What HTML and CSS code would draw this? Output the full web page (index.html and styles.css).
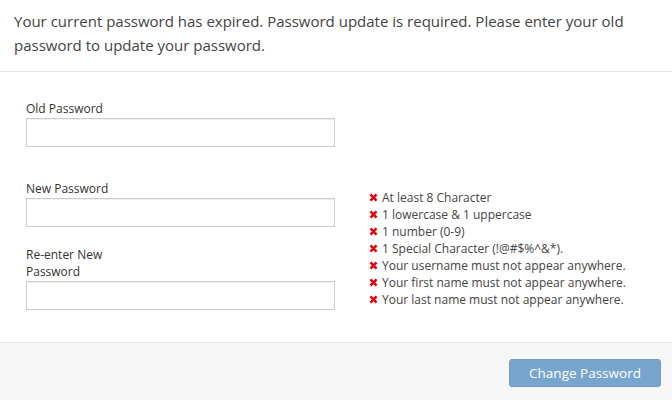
FILE: index.html
```html
<!DOCTYPE html>
<html>
<head>
<meta charset="utf-8">
<link rel="stylesheet" href="styles.css">
</head>
<body>
<div class="dialog">
  <div class="header">
    <p class="intro">Your current password has expired. Password update is required. Please enter your old password to update your password.</p>
  </div>
  <div class="content">
    <div class="fields">
      <div class="group g1">
        <label class="label">Old Password</label>
        <input class="input" type="password">
      </div>
      <div class="group g2">
        <label class="label">New Password</label>
        <input class="input" type="password">
      </div>
      <div class="group g3">
        <label class="label">Re-enter New<br>Password</label>
        <input class="input" type="password">
      </div>
    </div>
    <ul class="rules">
      <li><svg class="x" viewBox="0 0 10 10"><path d="M1.6 1.6 L8.4 8.4 M8.4 1.6 L1.6 8.4"/></svg>At least 8 Character</li>
      <li><svg class="x" viewBox="0 0 10 10"><path d="M1.6 1.6 L8.4 8.4 M8.4 1.6 L1.6 8.4"/></svg>1 lowercase &amp; 1 uppercase</li>
      <li><svg class="x" viewBox="0 0 10 10"><path d="M1.6 1.6 L8.4 8.4 M8.4 1.6 L1.6 8.4"/></svg>1 number (0-9)</li>
      <li><svg class="x" viewBox="0 0 10 10"><path d="M1.6 1.6 L8.4 8.4 M8.4 1.6 L1.6 8.4"/></svg>1 Special Character (!@#$%^&amp;*).</li>
      <li><svg class="x" viewBox="0 0 10 10"><path d="M1.6 1.6 L8.4 8.4 M8.4 1.6 L1.6 8.4"/></svg>Your username must not appear anywhere.</li>
      <li><svg class="x" viewBox="0 0 10 10"><path d="M1.6 1.6 L8.4 8.4 M8.4 1.6 L1.6 8.4"/></svg>Your first name must not appear anywhere.</li>
      <li><svg class="x" viewBox="0 0 10 10"><path d="M1.6 1.6 L8.4 8.4 M8.4 1.6 L1.6 8.4"/></svg>Your last name must not appear anywhere.</li>
    </ul>
  </div>
  <div class="footer">
    <button class="btn" type="button">Change Password</button>
  </div>
</div>
</body>
</html>
```

FILE: styles.css
```css
html, body {
  margin: 0;
  padding: 0;
  background: #fff;
}
body {
  font-family: "Open Sans", "DejaVu Sans", sans-serif;
  color: #333;
}
.header {
  padding: 9px 14px 14px 14px;
  border-bottom: 1px solid #e5e5e5;
}
.intro {
  margin: 0;
  font-size: 15px;
  line-height: 24px;
  color: #444;
}
.content {
  display: grid;
  grid-template-columns: 309px auto;
  column-gap: 34px;
  padding: 28px 0 32px 26px;
}
.fields {
  display: flex;
  flex-direction: column;
}
.group {
  display: flex;
  flex-direction: column;
}
.g1 { margin-bottom: 33px; }
.g2 { margin-bottom: 20px; }
.label {
  font-size: 12px;
  line-height: 17px;
  margin-bottom: 1px;
  color: #333;
}
.g3 .label { line-height: 16.5px; }
.input {
  box-sizing: border-box;
  width: 309px;
  height: 29px;
  margin: 0;
  border: 1px solid #ccc;
  box-shadow: inset 0 1px 1px rgba(0,0,0,0.06);
  background: #fff;
  padding: 0 8px;
}
.rules {
  list-style: none;
  margin: 89px 0 0 0;
  padding: 0;
  font-size: 12px;
  line-height: 17px;
  color: #444;
}
.rules li {
  display: flex;
  align-items: center;
  white-space: nowrap;
}
.x {
  width: 9px;
  height: 9px;
  margin-right: 4px;
  flex: none;
}
.x path {
  stroke: #e8000b;
  stroke-width: 2.8;
  fill: none;
}
.footer {
  border-top: 1px solid #e5e5e5;
  background: #f6f6f6;
  padding: 16px 11px 20px 0;
  display: flex;
  justify-content: flex-end;
}
.btn {
  box-sizing: border-box;
  width: 152px;
  height: 28px;
  border: 1px solid #749cc1;
  border-radius: 3px;
  background: #77a5cd;
  color: #fff;
  font-family: "Open Sans", "DejaVu Sans", sans-serif;
  font-size: 13.5px;
  line-height: 20px;
  padding: 0;
}
```
